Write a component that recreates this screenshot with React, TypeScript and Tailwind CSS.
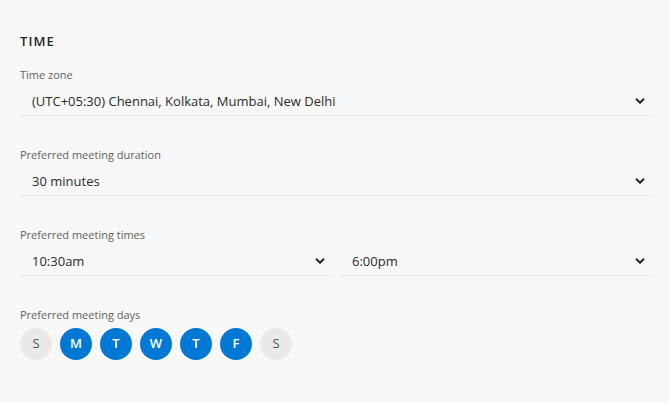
import { ChevronDown } from 'lucide-react'

const days = [
  { d: 'S', on: false },
  { d: 'M', on: true },
  { d: 'T', on: true },
  { d: 'W', on: true },
  { d: 'T', on: true },
  { d: 'F', on: true },
  { d: 'S', on: false },
]

function Select({ value, className = '' }: { value: string; className?: string }) {
  return (
    <div className={`flex h-[29px] items-center justify-between border-b border-[#e6e6e6] pl-3 pr-[3px] ${className}`}>
      <span className="pt-px text-[13px] text-[#2b2b2b]">{value}</span>
      <ChevronDown className="h-[14px] w-[14px] text-[#222]" strokeWidth={3.2} />
    </div>
  )
}

function Label({ children }: { children: React.ReactNode }) {
  return <div className="mb-1 text-[11px] leading-4 text-[#616161]">{children}</div>
}

export default function App() {
  return (
    <div
      className="min-h-[403px] w-full bg-[#f8f8f8] px-5 pt-[33px]"
      style={{ fontFamily: '"Open Sans", "Noto Sans", sans-serif' }}
    >
      <h2 className="h-4 text-[13px] font-semibold leading-4 tracking-[0.08em] text-[#262626]">TIME</h2>

      <div className="mt-[18px]">
        <Label>Time zone</Label>
        <Select value="(UTC+05:30) Chennai, Kolkata, Mumbai, New Delhi" />
      </div>

      <div className="mt-[31px]">
        <Label>Preferred meeting duration</Label>
        <Select value="30 minutes" />
      </div>

      <div className="mt-[31px]">
        <Label>Preferred meeting times</Label>
        <div className="flex gap-[10px]">
          <Select value="10:30am" className="flex-1" />
          <Select value="6:00pm" className="flex-1" />
        </div>
      </div>

      <div className="mt-[31px]">
        <div className="text-[11px] leading-4 text-[#616161]">Preferred meeting days</div>
        <div className="mt-[5px] flex gap-2">
          {days.map((x, i) => (
            <div
              key={i}
              className={`flex h-8 w-8 items-center justify-center rounded-full text-[13px] ${
                x.on ? 'bg-[#0078d4] font-semibold text-white' : 'bg-[#e9e9e9] text-[#555]'
              }`}
            >
              {x.d}
            </div>
          ))}
        </div>
      </div>
    </div>
  )
}
